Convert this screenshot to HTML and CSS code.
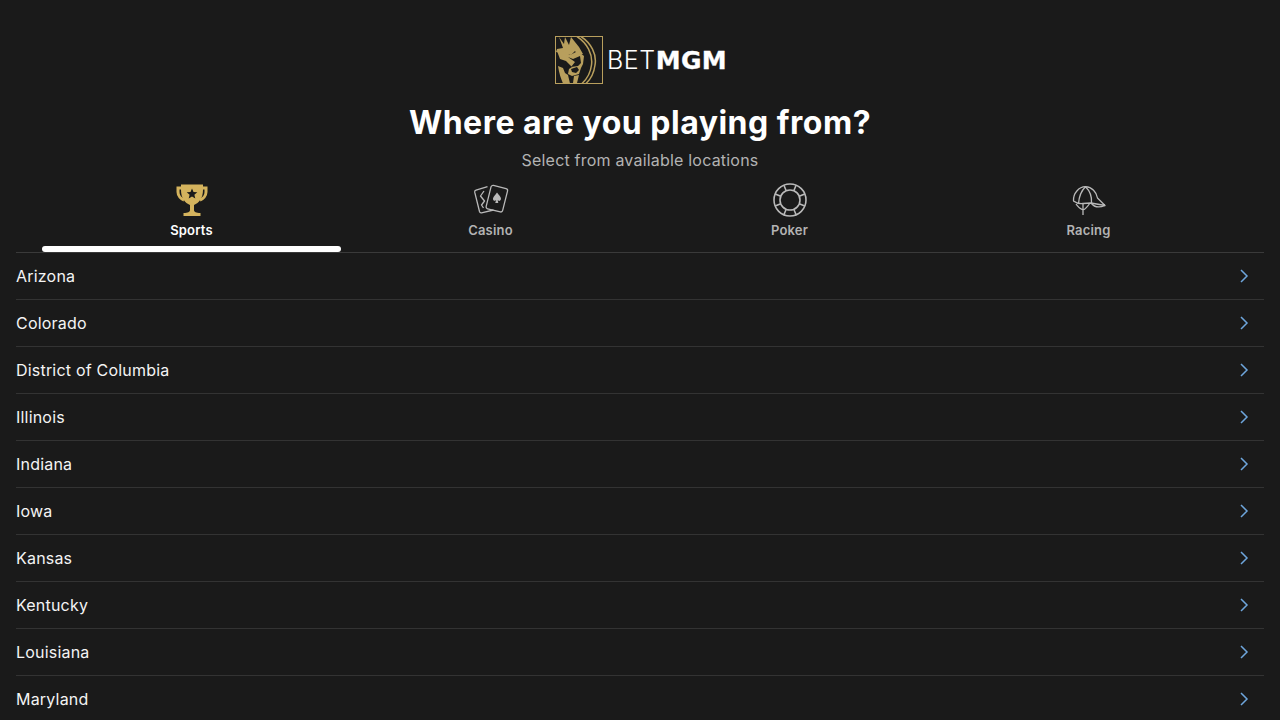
FILE: index.html
```html
<!DOCTYPE html>
<html lang="en">
<head>
<meta charset="utf-8">
<title>BetMGM</title>
<link rel="stylesheet" href="styles.css">
</head>
<body>
<header class="header">
  <div class="logo">
    <svg class="logo-mark" width="48" height="48" viewBox="0 0 48 48" fill="none">
      <rect x="0.5" y="0.5" width="47" height="47" stroke="#b89f5d"/>
      <g stroke="#b89f5d" stroke-width="1.500">
        <path d="M22 0.500C32 7 38 18 36.500 29 35.500 37 32 43 27 47.500"/>
        <path d="M26 0.500C36 7 42 18 40 29 39 37 36 43 31 47.500"/>
      </g>
      <path d="M4 1l5 7 1-7 4 8 2-8 8 10 4 7H22l-2-3-4 4-15-3 1-3 6-1z" fill="#b89f5d"/>
      <path d="M2 15l8 1 5 3 8-4 6 5-1 8-2 4-2 6-7 2-4-2 1-5 3-2-6-6-6-2z" fill="#b89f5d"/>
      <path d="M13 21l5 2 7-3 1 7-3 3-7 1 4-5zM16 33l6-2 2 3-3 3-4-1z" fill="#1a1a1a"/>
      <path d="M3 30l5 2 2 5 3 2 2 8.500H8C6 43 4 37 3 30z" fill="#b89f5d"/>
      <path d="M7 37l3 3-0 5zM19 40l5-1-2 8h-4z" fill="#b89f5d"/>
    </svg>
    <div class="wordmark"><span class="bet">BET</span><span class="mgm">MGM</span></div>
  </div>
  <h1 class="title">Where are you playing from?</h1>
  <p class="subtitle">Select from available locations</p>
</header>

<nav class="tabs-wrap">
  <div class="tabs">
    <div class="tab active">
      <svg class="tab-icon" width="36" height="36" viewBox="0 0 36 36">
        <path d="M7 2.500H29V8C29 16 25 21 20 23V28C20 30 22 31 26.500 31V34H9.500V31C14 31 16 30 16 28V23C11 21 7 16 7 8z" fill="#d4b35d"/>
        <path d="M7 6H4V10C4 14 7 17 10 18M29 6H32V10C32 14 29 17 26 18" fill="none" stroke="#d4b35d" stroke-width="3"/>
        <path d="M18 6.500l1.500 3.500 3.800.3-2.900 2.500.9 3.700-3.300-2-3.300 2 .9-3.700-2.900-2.500 3.800-.3z" fill="#1a1a1a"/>
      </svg>
      <span class="tab-label">Sports</span>
    </div>
    <div class="tab">
      <svg class="tab-icon" width="36" height="36" viewBox="0 0 36 36" fill="none" stroke="#b9b9b9" stroke-width="1.300" stroke-linejoin="round">
        <path d="M14.500 4.700L3 8.200c-1 .3-1.500 1.100-1.300 2L6.500 29.500c.3 1 1.100 1.500 2 1.300L20.500 28"/>
        <path d="M11 9L7.500 14l4 5-3 4 2 3"/>
        <rect x="0" y="0" width="17" height="24" rx="2" transform="translate(18.500 3) rotate(14)"/>
        <path d="M24 10.500c1.700 2.300 4 4 4 6.300 0 2-2.300 2.800-3.300 1.300l.6 2.900h-3.100l1-2.900c-1.100 1.300-3.500.5-3.200-1.700.3-2.100 2.900-3.700 4-5.900z" fill="#b9b9b9" stroke="none"/>
      </svg>
      <span class="tab-label">Casino</span>
    </div>
    <div class="tab">
      <svg class="tab-icon" width="36" height="36" viewBox="0 0 36 36" fill="none" stroke="#b9b9b9" stroke-width="1.600">
        <circle cx="18" cy="18" r="16"/>
        <circle cx="18" cy="18" r="10"/>
        <path d="M14.200 8.800L11.900 3.200M21.800 8.800L24.100 3.200M8.800 14.200L3.200 11.900M27.200 14.200L32.800 11.900M8.800 21.800L3.200 24.100M27.200 21.800L32.800 24.100M14.200 27.200L11.900 32.800M21.800 27.200L24.100 32.800"/>
      </svg>
      <span class="tab-label">Poker</span>
    </div>
    <div class="tab">
      <svg class="tab-icon" width="36" height="36" viewBox="0 0 36 36" fill="none" stroke="#b9b9b9" stroke-width="1.300" stroke-linejoin="round">
        <path d="M2.500 19C2 11 8 5 14.500 4.700 21 5 25.500 10 26.500 16L34 23.500 20 21 12 21.500C8 22 5 21 2.500 19z"/>
        <path d="M14.500 4.700C10 9 8 15 7.500 21.500M14.500 4.700C19 9 21 15 20.500 21"/>
        <path d="M12 21.500V33M5 22C7 25 9 27 12 28M12 28C15 27 17 24 19 21M20 21C23 25 28 26 34 23.500"/>
      </svg>
      <span class="tab-label">Racing</span>
    </div>
  </div>
</nav>

<ul class="list">
  <li class="row"><span>Arizona</span><svg class="chev" width="10" height="16" viewBox="0 0 10 16"><path d="M2 2L8 8L2 14"/></svg></li>
  <li class="row"><span>Colorado</span><svg class="chev" width="10" height="16" viewBox="0 0 10 16"><path d="M2 2L8 8L2 14"/></svg></li>
  <li class="row"><span>District of Columbia</span><svg class="chev" width="10" height="16" viewBox="0 0 10 16"><path d="M2 2L8 8L2 14"/></svg></li>
  <li class="row"><span>Illinois</span><svg class="chev" width="10" height="16" viewBox="0 0 10 16"><path d="M2 2L8 8L2 14"/></svg></li>
  <li class="row"><span>Indiana</span><svg class="chev" width="10" height="16" viewBox="0 0 10 16"><path d="M2 2L8 8L2 14"/></svg></li>
  <li class="row"><span>Iowa</span><svg class="chev" width="10" height="16" viewBox="0 0 10 16"><path d="M2 2L8 8L2 14"/></svg></li>
  <li class="row"><span>Kansas</span><svg class="chev" width="10" height="16" viewBox="0 0 10 16"><path d="M2 2L8 8L2 14"/></svg></li>
  <li class="row"><span>Kentucky</span><svg class="chev" width="10" height="16" viewBox="0 0 10 16"><path d="M2 2L8 8L2 14"/></svg></li>
  <li class="row"><span>Louisiana</span><svg class="chev" width="10" height="16" viewBox="0 0 10 16"><path d="M2 2L8 8L2 14"/></svg></li>
  <li class="row"><span>Maryland</span><svg class="chev" width="10" height="16" viewBox="0 0 10 16"><path d="M2 2L8 8L2 14"/></svg></li>
</ul>
</body>
</html>
```
FILE: styles.css
```css
* { box-sizing: border-box; }
html, body { margin: 0; height: 720px; overflow: hidden; }
body {
  background: #1a1a1a;
  color: #fff;
  font-family: Inter, "Liberation Sans", sans-serif;
  padding: 0 16px;
}
.header { display: flex; flex-direction: column; align-items: center; padding-top: 36px; }
.logo { display: flex; align-items: center; height: 48px; gap: 4px; margin-left: 2px; }
.logo-mark { display: block; }
.wordmark { font-size: 24px; color: #fff; display: flex; align-items: baseline; }
.bet { font-family: Inter, sans-serif; font-size: 25px; font-weight: 300; letter-spacing: 0.6px; }
.mgm { font-family: "DejaVu Sans", sans-serif; font-size: 25px; font-weight: 700; letter-spacing: 0.3px; -webkit-text-stroke: 0.3px #fff; }
.title { margin: 17px 0 0; font-size: 32px; line-height: 44px; font-weight: 700; letter-spacing: 0.5px; }
.subtitle { margin: 5px 0 0; font-size: 16px; line-height: 20px; color: #b3b3b3; letter-spacing: 0.2px; }
.tabs-wrap { border-bottom: 1px solid #3a3a3a; padding: 0 26px; height: 83px; }
.tabs { display: grid; grid-template-columns: repeat(4, 1fr); height: 82px; }
.tab { display: flex; flex-direction: column; align-items: center; padding-top: 12px; position: relative; color: #b3b3b3; }
.tab-icon { display: block; flex: none; }
.tab-label { font-size: 13px; line-height: 18px; font-weight: 600; margin-top: 3px; letter-spacing: 0.2px; }
.tab.active { color: #fff; }
.tab.active::after { content: ""; position: absolute; left: 0; right: 0; bottom: 0; height: 6px; border-radius: 3px; background: #fff; }
.list { list-style: none; margin: 0; padding: 0; }
.row { display: flex; justify-content: space-between; align-items: center; height: 47px; border-bottom: 1px solid #333; font-size: 16px; color: #f4f4f4; letter-spacing: 0.2px; padding-right: 15px; }
.chev { display: block; fill: none; stroke: #6ea6dc; stroke-width: 1.500; }
```
